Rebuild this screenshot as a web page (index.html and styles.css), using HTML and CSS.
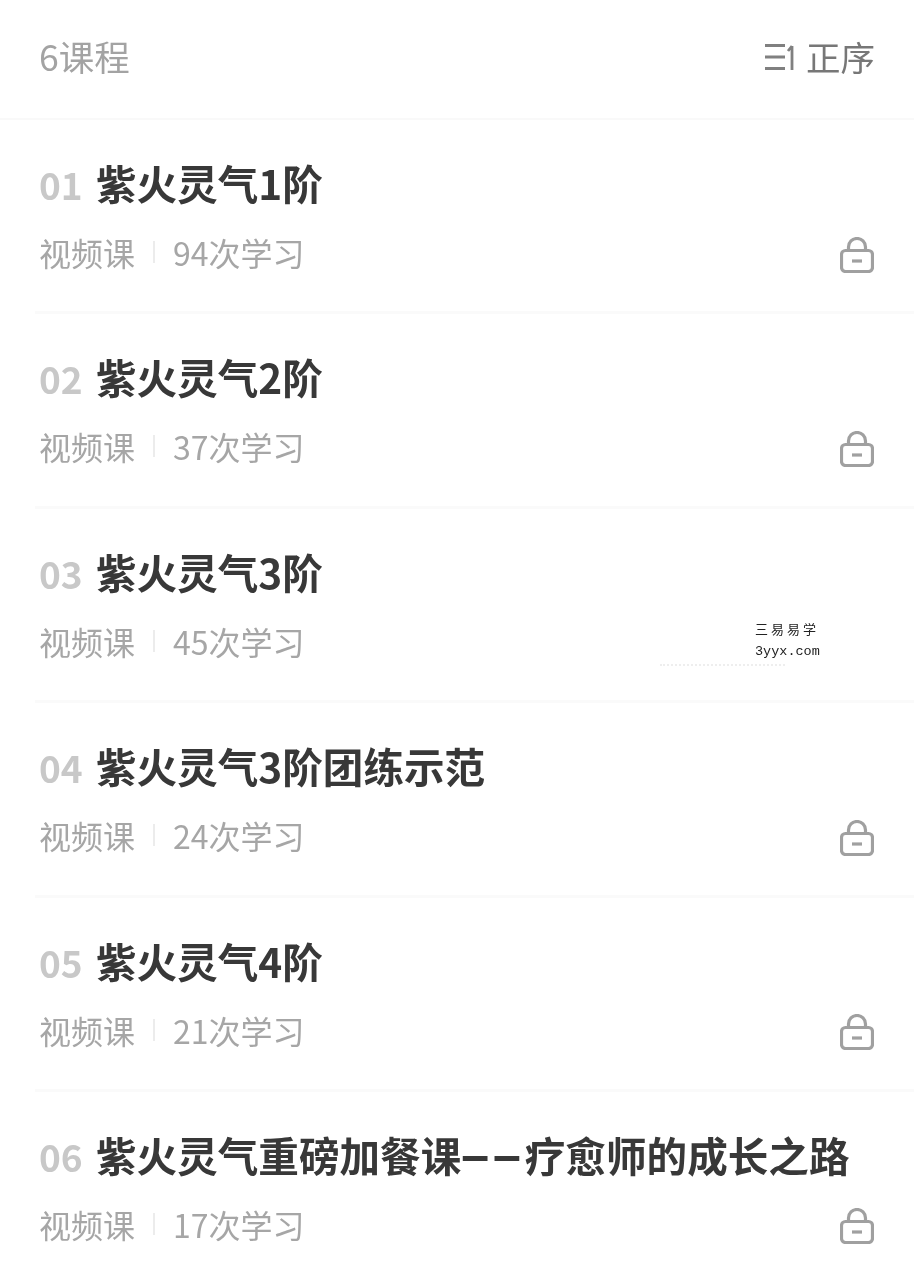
FILE: index.html
```html
<!DOCTYPE html>
<html lang="zh-CN">
<head>
<meta charset="utf-8">
<title>课程列表</title>
<link rel="stylesheet" href="styles.css">
</head>
<body>
<header class="head">
  <span class="count">6课程</span>
  <span class="sort">
    <svg class="sort-icon" viewBox="0 0 31 28" aria-hidden="true">
      <path d="M0 3.5h20M0 15h20M0 26.5h20M27 28V4M27 4l-4 5" />
    </svg>
    <span>正序</span>
  </span>
</header>
<main class="list">
  <article class="row">
    <h2 class="title"><span class="num">01</span>紫火灵气1阶</h2>
    <div class="meta"><span>视频课</span><i class="sep"></i><span>94次学习</span>
      <svg class="lock" viewBox="0 0 34 36" aria-hidden="true"><path d="M8.5 13V10a8.5 8.5 0 0 1 17 0v3"/><rect x="1.5" y="13.5" width="31" height="21" rx="4"/><path d="M12 24h10"/></svg>
    </div>
  </article>
  <article class="row">
    <h2 class="title"><span class="num">02</span>紫火灵气2阶</h2>
    <div class="meta"><span>视频课</span><i class="sep"></i><span>37次学习</span>
      <svg class="lock" viewBox="0 0 34 36" aria-hidden="true"><path d="M8.5 13V10a8.5 8.5 0 0 1 17 0v3"/><rect x="1.5" y="13.5" width="31" height="21" rx="4"/><path d="M12 24h10"/></svg>
    </div>
  </article>
  <article class="row">
    <h2 class="title"><span class="num">03</span>紫火灵气3阶</h2>
    <div class="meta"><span>视频课</span><i class="sep"></i><span>45次学习</span>
      <div class="mark"><span class="mark-cn">三易易学</span><span class="mark-en">3yyx.com</span></div>
    </div>
  </article>
  <article class="row">
    <h2 class="title"><span class="num">04</span>紫火灵气3阶团练示范</h2>
    <div class="meta"><span>视频课</span><i class="sep"></i><span>24次学习</span>
      <svg class="lock" viewBox="0 0 34 36" aria-hidden="true"><path d="M8.5 13V10a8.5 8.5 0 0 1 17 0v3"/><rect x="1.5" y="13.5" width="31" height="21" rx="4"/><path d="M12 24h10"/></svg>
    </div>
  </article>
  <article class="row">
    <h2 class="title"><span class="num">05</span>紫火灵气4阶</h2>
    <div class="meta"><span>视频课</span><i class="sep"></i><span>21次学习</span>
      <svg class="lock" viewBox="0 0 34 36" aria-hidden="true"><path d="M8.5 13V10a8.5 8.5 0 0 1 17 0v3"/><rect x="1.5" y="13.5" width="31" height="21" rx="4"/><path d="M12 24h10"/></svg>
    </div>
  </article>
  <article class="row">
    <h2 class="title"><span class="num">06</span>紫火灵气重磅加餐课<span class="dash">––</span>疗愈师的成长之路</h2>
    <div class="meta"><span>视频课</span><i class="sep"></i><span>17次学习</span>
      <svg class="lock" viewBox="0 0 34 36" aria-hidden="true"><path d="M8.5 13V10a8.5 8.5 0 0 1 17 0v3"/><rect x="1.5" y="13.5" width="31" height="21" rx="4"/><path d="M12 24h10"/></svg>
    </div>
  </article>
</main>
</body>
</html>
```
FILE: styles.css
```css
* { box-sizing: border-box; }
html, body { margin: 0; padding: 0; }
body {
  width: 914px;
  height: 1280px;
  overflow: hidden;
  background: #fff;
  font-family: "Noto Sans CJK SC", "Noto Sans", sans-serif;
}
.head {
  height: 120px;
  padding: 0 39px 7px 39px;
  display: flex;
  align-items: center;
  justify-content: space-between;
  font-size: 35.5px;
  border-bottom: 2px solid #f9f9f9;
  filter: blur(0.5px);
}
.count { color: #a3a3a3; }
.sort {
  display: flex;
  align-items: center;
  gap: 10px;
  color: #777;
  font-size: 34.5px;
}
.sort-icon {
  width: 31px;
  height: 28px;
  fill: none;
  stroke: #808080;
  stroke-width: 2.8;
}
.list { filter: blur(0.5px); }
.row {
  height: 194.4px;
  margin-left: 35px;
  padding: 35px 40px 0 4px;
  border-bottom: 3px solid #fafafa;
}
.title {
  margin: 0;
  height: 56px;
  color: #383838;
  font-size: 40.6px;
  font-weight: 700;
  line-height: 56px;
  white-space: nowrap;
}
.num {
  display: inline-block;
  width: 57px;
  color: #c8c8c8;
  font-size: 37px;
  font-weight: 700;
}
.dash {
  font-family: "Liberation Sans", sans-serif;
  font-size: 50px;
  font-weight: 700;
  letter-spacing: 4px;
  line-height: 40px;
  margin-left: 0;
}
.meta {
  margin-top: 17px;
  height: 48px;
  display: flex;
  align-items: center;
  color: #a6a6a6;
  font-size: 32px;
  line-height: 48px;
  position: relative;
}
.sep {
  width: 2px;
  height: 22px;
  margin: 0 18px;
  background: #ececec;
}
.lock {
  width: 34px;
  height: 36px;
  margin: 5px 0 0 auto;
  fill: none;
  stroke: #a0a0a0;
  stroke-width: 3.2;
}
.mark {
  position: absolute;
  left: 716px;
  top: 3px;
  display: flex;
  flex-direction: column;
  gap: 5px;
  color: #222;
  font-size: 13px;
  line-height: 18px;
}
.mark::after {
  content: "";
  position: absolute;
  left: -95px;
  width: 125px;
  top: 44px;
  border-top: 2px dotted #eeeeee;
}
.mark-cn { letter-spacing: 3px; }
.mark-en { font-family: "Liberation Mono", monospace; font-size: 13.5px; }
```
